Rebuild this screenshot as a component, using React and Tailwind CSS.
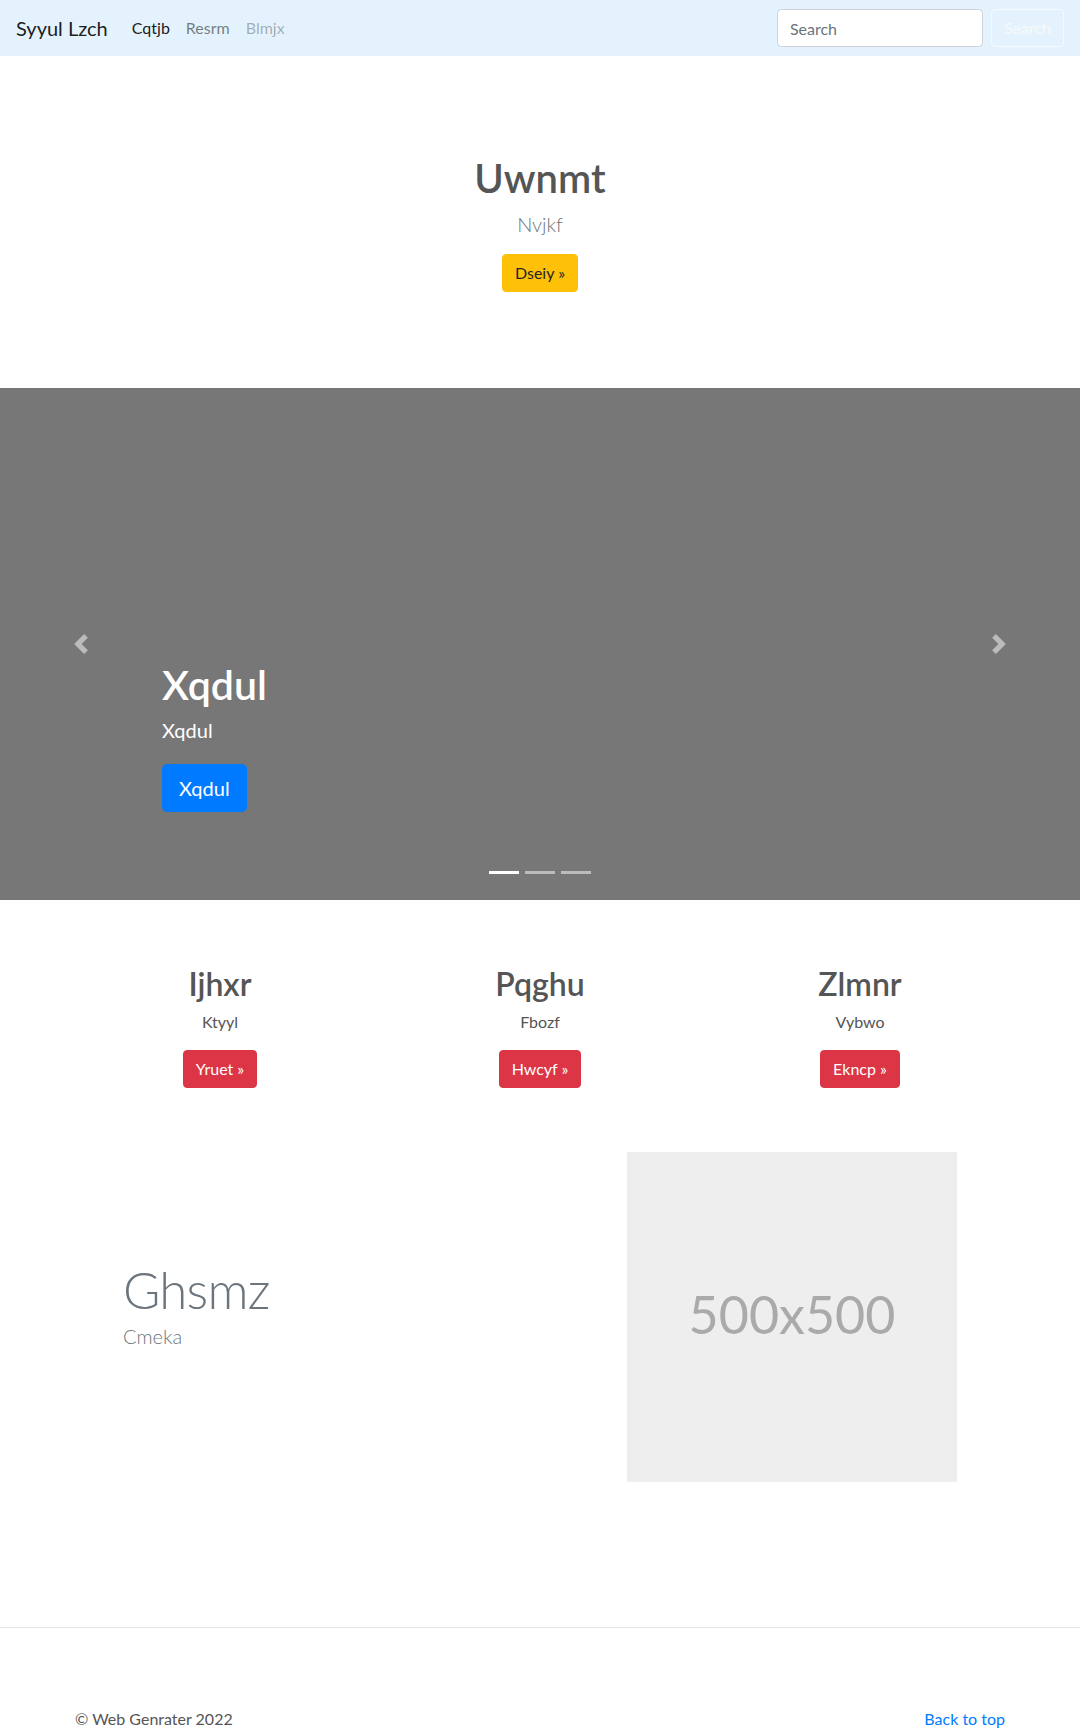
import React from "react";

const navLinks = [
  { label: "Cqtjb", cls: "text-black/90" },
  { label: "Resrm", cls: "text-black/50" },
  { label: "Blmjx", cls: "text-black/30" },
];

const cards = [
  { title: "Ijhxr", text: "Ktyyl", btn: "Yruet »" },
  { title: "Pqghu", text: "Fbozf", btn: "Hwcyf »" },
  { title: "Zlmnr", text: "Vybwo", btn: "Ekncp »" },
];

function Chevron({ dir }) {
  const d =
    dir === "left"
      ? "M5.25 0l-4 4 4 4 1.5-1.5-2.5-2.5 2.5-2.5-1.5-1.5z"
      : "M2.75 0l-1.5 1.5 2.5 2.5-2.5 2.5 1.5 1.5 4-4-4-4z";
  return (
    <svg width="20" height="20" viewBox="0 0 8 8" fill="#fff">
      <path d={d} />
    </svg>
  );
}

export default function App() {
  return (
    <div className="min-h-[1731px] bg-white font-['Lato','Noto_Sans',sans-serif] text-[#555]">
      {/* navbar */}
      <nav className="h-14 bg-[#e3f2fd] flex items-center px-4">
        <a href="#" className="text-[20px] leading-[30px] text-black/90 mr-4">
          Syyul Lzch
        </a>
        <ul className="flex">
          {navLinks.map((l) => (
            <li key={l.label}>
              <a href="#" className={`block px-2 py-2 text-[16px] leading-6 ${l.cls}`}>
                {l.label}
              </a>
            </li>
          ))}
        </ul>
        <form className="ml-auto flex items-center gap-2">
          <input
            type="text"
            placeholder="Search"
            className="w-[206px] h-[38px] px-3 rounded bg-white border border-[#ced4da] text-[16px] placeholder:text-[#6c757d] outline-none"
          />
          <button
            type="button"
            className="h-[38px] px-3 rounded border border-[#f8f9fa] text-[#f8f9fa] text-[16px]"
          >
            Search
          </button>
        </form>
      </nav>

      {/* hero */}
      <section className="text-center pt-[98px] pb-[96px]">
        <h1 className="text-[40px] leading-[48px] font-semibold">Uwnmt</h1>
        <p className="mt-[7px] text-[20px] leading-[30px] font-light text-[#6c757d]">Nvjkf</p>
        <a
          href="#"
          className="inline-block mt-[15px] px-3 py-[6px] leading-6 text-[16px] rounded bg-[#ffc107] border border-[#ffc107] text-[#212529]"
        >
          Dseiy »
        </a>
      </section>

      {/* carousel */}
      <div className="relative h-[512px] bg-[#777] overflow-hidden">
        <a href="#" className="absolute left-0 top-0 bottom-0 w-[15%] flex items-center justify-center opacity-50">
          <Chevron dir="left" />
        </a>
        <a href="#" className="absolute right-0 top-0 bottom-0 w-[15%] flex items-center justify-center opacity-50">
          <Chevron dir="right" />
        </a>
        <div className="absolute left-[15%] right-[15%] bottom-[88px] text-left text-white">
          <h1 className="text-[41px] leading-[48px] font-semibold">Xqdul</h1>
          <p className="mt-[6px] text-[20px] leading-[30px]">Xqdul</p>
          <a
            href="#"
            className="inline-block mt-[19px] px-4 py-2 text-[20px] leading-[30px] rounded-[5px] bg-[#007bff] border border-[#007bff] text-white"
          >
            Xqdul
          </a>
        </div>
        <ol className="absolute left-0 right-0 bottom-4 flex justify-center">
          <li className="w-[30px] h-[3px] mx-[3px] my-[10px] bg-white" />
          <li className="w-[30px] h-[3px] mx-[3px] my-[10px] bg-white opacity-50" />
          <li className="w-[30px] h-[3px] mx-[3px] my-[10px] bg-white opacity-50" />
        </ol>
      </div>

      {/* marketing columns */}
      <div className="w-[960px] mx-auto pt-[65px] grid grid-cols-3">
        {cards.map((c) => (
          <div key={c.title} className="px-[15px] text-center">
            <h2 className="text-[32px] leading-[38px] font-semibold">{c.title}</h2>
            <p className="mt-[7px] text-[16px] leading-6">{c.text}</p>
            <a
              href="#"
              className="inline-block mt-4 px-3 py-[6px] leading-6 text-[16px] rounded bg-[#dc3545] border border-[#dc3545] text-white"
            >
              {c.btn}
            </a>
          </div>
        ))}
      </div>

      {/* featurette */}
      <div className="w-[960px] mx-auto px-[15px] mt-[64px]">
        <div className="px-12 flex items-center justify-between">
          <div className="mb-[20px]">
            <h2 className="text-[51px] leading-none font-light tracking-[-0.8px] text-[#6c757d]">Ghsmz</h2>
            <p className="mt-[6px] text-[20px] leading-[30px] font-light text-[#6c757d]">Cmeka</p>
          </div>
          <div className="w-[330px] h-[330px] pb-[6px] bg-[#eee] flex items-center justify-center text-[#aaa] text-[52px]">
            500x500
          </div>
        </div>
      </div>

      <hr className="mt-[145px] border-0 border-t border-[#e5e5e5]" />

      {/* footer */}
      <footer className="w-[960px] mx-auto px-[15px] pt-[79px] flex justify-between text-[16px] leading-6">
        <p>© Web Genrater 2022</p>
        <a href="#" className="text-[#007bff]">Back to top</a>
      </footer>
    </div>
  );
}
